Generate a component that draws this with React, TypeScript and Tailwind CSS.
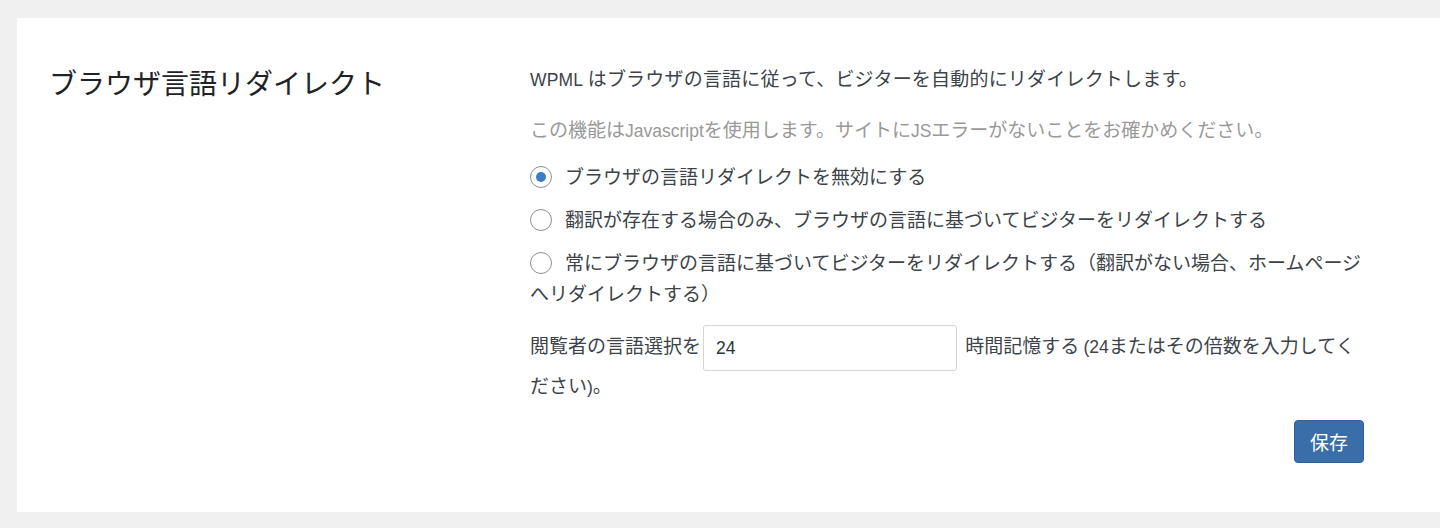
import React, { useState } from 'react';

const latin = "font-['Liberation_Sans',sans-serif] text-[17.5px]";

const options = [
    { id: 'off', label: 'ブラウザの言語リダイレクトを無効にする' },
    { id: 'exists', label: '翻訳が存在する場合のみ、ブラウザの言語に基づいてビジターをリダイレクトする' },
    { id: 'always', label: '常にブラウザの言語に基づいてビジターをリダイレクトする（翻訳がない場合、ホームページへリダイレクトする）' },
];

const Radio = ({ checked }: { checked: boolean }) => (
    <span className="relative -top-[2px] mr-[13px] inline-flex h-[22px] w-[22px] items-center justify-center rounded-full border border-[#8c8f94] bg-white align-middle">
        {checked && <span className="h-[10px] w-[10px] rounded-full bg-[#3c7bc6]"></span>}
    </span>
);

const App = () => {
    const [mode, setMode] = useState('off');
    const [hours, setHours] = useState('24');

    return (
        <div className="h-[528px] bg-[#f0f0f0] pl-[17px] pt-[18px] font-['Noto_Sans_CJK_JP',sans-serif]">
            <div className="flex h-[494px] bg-white pl-[32px] pt-[44px]">
                {/* Section title */}
                <div className="w-[481px] shrink-0">
                    <h2 className="text-[28px] leading-[40px] text-[#1d2327]">ブラウザ言語リダイレクト</h2>
                </div>

                {/* Settings */}
                <div className="w-[836px] text-[19px] leading-[31px] text-[#3c434a]">
                    <p className="tracking-[0.2px]">
                        <span className={latin}>WPML </span>はブラウザの言語に従って、ビジターを自動的にリダイレクトします。
                    </p>
                    <p className="mt-[17px] text-[#999]">
                        この機能は<span className={latin}>Javascript</span>を使用します。サイトに<span className={latin}>JS</span>エラーがないことをお確かめください。
                    </p>

                    <div className="mt-[13px] flex flex-col gap-[12px]">
                        {options.map((opt) => (
                            <label key={opt.id} className="block cursor-pointer" onClick={() => setMode(opt.id)}>
                                <Radio checked={mode === opt.id} />
                                {opt.label}
                            </label>
                        ))}
                    </div>

                    <p className="mt-[17px] leading-[28px]">
                        閲覧者の言語選択を
                        <input
                            type="text"
                            value={hours}
                            onChange={(e) => setHours(e.target.value)}
                            className={`ml-[2px] mr-[4px] h-[46px] w-[254px] rounded-[3px] border border-[#d5d5d5] px-[12px] align-middle text-[#2c3338] outline-none ${latin}`}
                        />
                        {' '}時間記憶する <span className={latin}>(24</span>またはその倍数を入力してください<span className={latin}>)</span>。
                    </p>

                    <div className="mt-[19px] flex justify-end pr-[2px]">
                        <button className="h-[43px] w-[70px] rounded-[4px] border border-[#2f6199] bg-[#3a6ea8] text-[19px] text-white">
                            保存
                        </button>
                    </div>
                </div>
            </div>
        </div>
    );
};

export default App;
